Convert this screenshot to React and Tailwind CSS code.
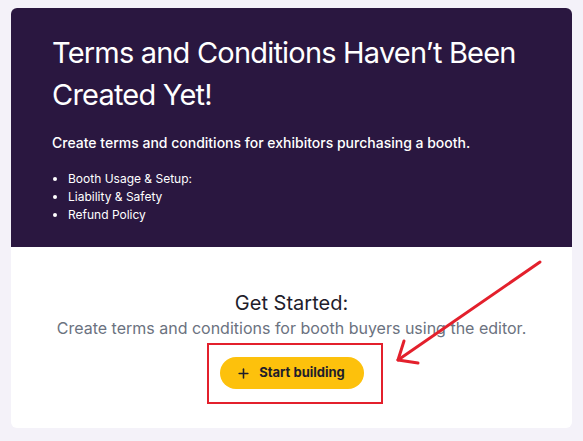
import { Plus } from 'lucide-react';

export default function App() {
  return (
    <div
      className="relative min-h-[441px] w-[583px] bg-[#f4f2f9] px-[11px] pt-2 pb-[13px]"
      style={{ fontFamily: 'Inter, "Noto Sans", sans-serif' }}
    >
      <div className="overflow-hidden rounded-md bg-white">
        {/* header */}
        <div className="h-[239px] bg-[#2a1740] pl-[41px] pt-[24px] text-white">
          <h1 className="text-[29px] font-normal leading-[42px] tracking-[-0.8px]">
            Terms and Conditions Haven’t Been Created Yet!
          </h1>
          <p className="mt-[17px] text-[14px] font-medium leading-5">
            Create terms and conditions for exhibitors purchasing a booth.
          </p>
          <ul className="mt-[17px] list-disc pl-[16px] text-[12px] leading-[18px]">
            <li>Booth Usage &amp; Setup:</li>
            <li>Liability &amp; Safety</li>
            <li>Refund Policy</li>
          </ul>
        </div>

        {/* body */}
        <div className="flex h-[181px] flex-col items-center pt-[44px]">
          <h2 className="text-[20px] leading-6 text-[#1f1d2b]">Get Started:</h2>
          <p className="mt-[3px] text-[16px] leading-5 text-[#6b7280]">
            Create terms and conditions for booth buyers using the editor.
          </p>
          <div className="mt-[5px] ml-[7px] border-2 border-[#e3202c] pl-[11px] pr-[17px] pt-[12px] pb-[13px]">
            <button className="flex h-8 items-center gap-2 rounded-full bg-[#fdc10c] pl-[16px] pr-[19px] text-[13px] font-bold text-[#1f1d2b]">
              <Plus size={15} strokeWidth={2.5} />
              Start building
            </button>
          </div>
        </div>
      </div>

      {/* annotation arrow */}
      <svg
        className="pointer-events-none absolute left-0 top-0"
        width="583"
        height="441"
        viewBox="0 0 583 441"
      >
        <g stroke="#e3202c" strokeWidth="3" strokeLinecap="round" fill="none">
          <line x1="540" y1="262" x2="398" y2="360" />
          <polyline points="404,341 398,360 418,363" strokeLinejoin="round" />
        </g>
      </svg>
    </div>
  );
}
